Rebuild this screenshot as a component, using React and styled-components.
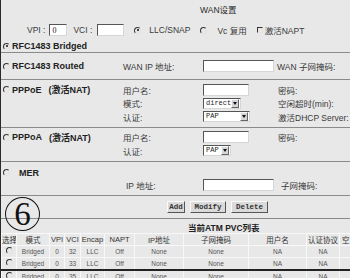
import React from "react";
import styled, { createGlobalStyle } from "styled-components";

const GlobalStyle = createGlobalStyle`
  html, body {
    margin: 0;
    padding: 0;
    background: #e8e8e8;
  }
`;

const Page = styled.div`
  position: relative;
  width: 350px;
  height: 278px;
  overflow: hidden;
  box-sizing: border-box;
  background: #e8e8e8;
  border-left: 1px solid #2b2b2b;
  font-family: "Liberation Sans", "Noto Sans CJK SC", sans-serif;
  font-size: 8.5px;
  color: #3a3a3a;
`;

const Title = styled.div`
  height: 20px;
  line-height: 20px;
  padding-left: 199px;
  color: #2a2a2a;
`;

const TopRow = styled.div`
  display: flex;
  align-items: center;
  height: 20px;
  padding-left: 26px;
  white-space: nowrap;
`;

const Item = styled.span`
  display: inline-flex;
  align-items: center;
  margin-left: ${(p) => p.$ml || 0}px;
`;

const TextBox = styled.input`
  box-sizing: border-box;
  width: ${(p) => p.$w}px;
  height: 12px;
  margin: 0;
  padding: 0 2px;
  border: 1px solid;
  border-color: #555 #d6d6d6 #d6d6d6 #555;
  background: #fff;
  font: 8px "Liberation Serif", serif;
  color: #222;
  outline: none;
`;

const Radio = styled.span`
  position: relative;
  display: inline-block;
  box-sizing: border-box;
  width: 7px;
  height: 7px;
  border-radius: 50%;
  border: 1px solid;
  border-color: #333 #e2e2e2 #e2e2e2 #333;
  flex: none;

  &::after {
    content: "";
    display: ${(p) => (p.$on ? "block" : "none")};
    position: absolute;
    left: 1.5px;
    top: 1.5px;
    width: 2px;
    height: 2px;
    border-radius: 50%;
    background: #111;
  }
`;

const Check = styled.span`
  display: inline-block;
  box-sizing: border-box;
  width: 6px;
  height: 6px;
  border: 1px solid;
  border-color: #333 #e2e2e2 #e2e2e2 #333;
`;

const Section = styled.div`
  display: flex;
  padding: ${(p) => p.$pt || 0}px 0 ${(p) => p.$pb || 0}px;
  border-bottom: 1px solid #8a8a8a;
`;

const Mode = styled.div`
  display: flex;
  align-items: center;
  gap: ${(p) => p.$gap || 2}px;
  width: 122px;
  height: ${(p) => p.$h}px;
  flex: none;
  box-sizing: border-box;
  padding-left: 2px;
  font-weight: bold;
  font-size: 9px;
  color: #222;
  white-space: nowrap;
`;

const Note = styled.span`
  margin-left: 5px;
`;

const Fields = styled.div`
  display: flex;
  flex-direction: column;
  flex: 1;
`;

const FieldRow = styled.div`
  display: grid;
  grid-template-columns: 80px 73px 1fr;
  align-items: center;
  height: ${(p) => p.$h}px;
  white-space: nowrap;
`;

const Label = styled.span`
  padding-left: ${(p) => p.$pl || 0}px;
`;

const Select = styled.span`
  display: inline-flex;
  box-sizing: border-box;
  width: ${(p) => p.$w}px;
  height: 11px;
  background: #fff;
  border: 1px solid;
  border-color: #555 #d6d6d6 #d6d6d6 #555;
  font: 7px "Liberation Mono", monospace;
  color: #222;
`;

const SelectText = styled.span`
  flex: 1;
  padding-left: 2px;
  line-height: 9px;
`;

const SelectArrow = styled.span`
  display: flex;
  align-items: center;
  justify-content: center;
  box-sizing: border-box;
  width: 8px;
  margin: 0 1px 0 0;
  background: #d6d6d6;
  border: 1px solid;
  border-color: #fafafa #666 #666 #fafafa;

  &::before {
    content: "";
    border-left: 2px solid transparent;
    border-right: 2px solid transparent;
    border-top: 3px solid #111;
  }
`;

const ButtonBar = styled.div`
  display: flex;
  align-items: center;
  gap: 5px;
  height: 22px;
  padding-left: 166px;
  border-bottom: 1px solid #8a8a8a;
`;

const Button = styled.button`
  box-sizing: border-box;
  width: ${(p) => p.$w}px;
  height: 12px;
  margin: 0;
  padding: 0;
  font: bold 7.5px "Liberation Mono", monospace;
  line-height: 10px;
  color: #333;
  background: #dadada;
  border: 1px solid;
  border-color: #fafafa #555 #555 #fafafa;
`;

const Marker = styled.div`
  position: absolute;
  left: 4px;
  top: 197px;
  width: 35px;
  height: 34px;
  box-sizing: border-box;
  border: 1.5px solid #111;
  border-radius: 50%;
  display: flex;
  align-items: center;
  justify-content: center;
  font: 33px/1 "Liberation Serif", serif;
  color: #111;
`;

const TableTitle = styled.div`
  height: 14px;
  box-sizing: border-box;
  padding: 4px 0 0 187px;
  line-height: 10px;
  font-weight: bold;
  font-size: 8.5px;
  color: #222;
`;

const Table = styled.table`
  border-collapse: collapse;
  table-layout: fixed;
  width: 378px;
`;

const Col = styled.col`
  width: ${(p) => p.$w}px;
`;

const Th = styled.th`
  height: 11px;
  padding: 0 0 0 ${(p) => (p.$left ? 2 : 0)}px;
  border: 1px solid #f8f8f8;
  font-weight: normal;
  font-size: 7.5px;
  color: #333;
  text-align: ${(p) => (p.$left ? "left" : "center")};
  white-space: nowrap;
  overflow: hidden;
`;

const Row = styled.tr`
  border-top: ${(p) => (p.$cut ? "2px solid #222" : "1px solid #f8f8f8")};
`;

const Td = styled.td`
  height: 11px;
  padding: 0;
  border: 1px solid #f8f8f8;
  text-align: center;
  font-size: 6.5px;
  color: #555;
  white-space: nowrap;
  overflow: hidden;
`;

const widths = [15, 33, 15, 16, 24, 30, 49, 65, 58, 33, 40];
const headers = ["选择", "模式", "VPI", "VCI", "Encap", "NAPT", "IP地址", "子网掩码", "用户名", "认证协议", "空"];
const pvcs = [
  ["Bridged", "0", "32", "LLC", "Off", "None", "None", "NA", "NA", ""],
  ["Bridged", "0", "33", "LLC", "Off", "None", "None", "NA", "NA", ""],
  ["Bridged", "0", "35", "LLC", "Off", "None", "None", "NA", "NA", ""],
];

function DropDown({ w, value }) {
  return (
    <Select $w={w}>
      <SelectText>{value}</SelectText>
      <SelectArrow />
    </Select>
  );
}

export default function App() {
  return (
    <Page>
      <GlobalStyle />
      <Title>WAN设置</Title>

      <TopRow>
        <Item>VPI :</Item>
        <Item $ml={4}>
          <TextBox $w={18} defaultValue="0" readOnly />
        </Item>
        <Item $ml={6}>VCI :</Item>
        <Item $ml={5}>
          <TextBox $w={27} readOnly />
        </Item>
        <Item $ml={10}>
          <Radio $on />
        </Item>
        <Item $ml={8}>LLC/SNAP</Item>
        <Item $ml={10}>
          <Radio />
        </Item>
        <Item $ml={10}>Vc 复用</Item>
        <Item $ml={10}>
          <Check />
        </Item>
        <Item $ml={2}>激活NAPT</Item>
      </TopRow>

      <Section>
        <Mode $h={12}>
          <Radio $on />
          RFC1483 Bridged
        </Mode>
      </Section>

      <Section $pt={6} $pb={6}>
        <Mode $h={14}>
          <Radio />
          RFC1483 Routed
        </Mode>
        <Fields>
          <FieldRow $h={14}>
            <Label>WAN IP 地址:</Label>
            <TextBox $w={71} readOnly />
            <Label $pl={1}>WAN 子网掩码:</Label>
          </FieldRow>
        </Fields>
      </Section>

      <Section $pt={3} $pb={3}>
        <Mode $h={13.5}>
          <Radio />
          PPPoE<Note>(激活NAT)</Note>
        </Mode>
        <Fields>
          <FieldRow $h={13.5}>
            <Label>用户名:</Label>
            <TextBox $w={46} readOnly />
            <Label $pl={2}>密码:</Label>
          </FieldRow>
          <FieldRow $h={13.5}>
            <Label>模式:</Label>
            <DropDown w={38} value="direct" />
            <Label $pl={2}>空闲超时(min):</Label>
          </FieldRow>
          <FieldRow $h={13.5}>
            <Label>认证:</Label>
            <DropDown w={47} value="PAP" />
            <Label $pl={2}>激活DHCP Server:</Label>
          </FieldRow>
        </Fields>
      </Section>

      <Section $pt={3} $pb={3}>
        <Mode $h={13.5}>
          <Radio />
          PPPoA<Note>(激活NAT)</Note>
        </Mode>
        <Fields>
          <FieldRow $h={13.5}>
            <Label>用户名:</Label>
            <TextBox $w={46} readOnly />
            <Label $pl={2}>密码:</Label>
          </FieldRow>
          <FieldRow $h={13.5}>
            <Label>认证:</Label>
            <DropDown w={28} value="PAP" />
          </FieldRow>
        </Fields>
      </Section>

      <Section $pt={5.5} $pb={4.5}>
        <Mode $h={11.5} $gap={9}>
          <Radio />
          MER
        </Mode>
        <Fields>
          <FieldRow $h={11.5} />
          <FieldRow $h={11.5}>
            <Label $pl={3}>IP 地址:</Label>
            <TextBox $w={71} readOnly />
            <Label $pl={5}>子网掩码:</Label>
          </FieldRow>
        </Fields>
      </Section>

      <ButtonBar>
        <Button $w={18}>Add</Button>
        <Button $w={36}>Modify</Button>
        <Button $w={37}>Delete</Button>
      </ButtonBar>

      <Marker>6</Marker>

      <TableTitle>当前ATM PVC列表</TableTitle>
      <Table>
        <colgroup>
          {widths.map((w, i) => (
            <Col key={i} $w={w} />
          ))}
        </colgroup>
        <thead>
          <tr>
            {headers.map((h, i) => (
              <Th key={h} $left={i === headers.length - 1}>
                {h}
              </Th>
            ))}
          </tr>
        </thead>
        <tbody>
          {pvcs.map((row, i) => (
            <Row key={i} $cut={i === 2}>
              <Td>
                <Radio />
              </Td>
              {row.map((cell, j) => (
                <Td key={j}>{cell}</Td>
              ))}
            </Row>
          ))}
        </tbody>
      </Table>
    </Page>
  );
}
